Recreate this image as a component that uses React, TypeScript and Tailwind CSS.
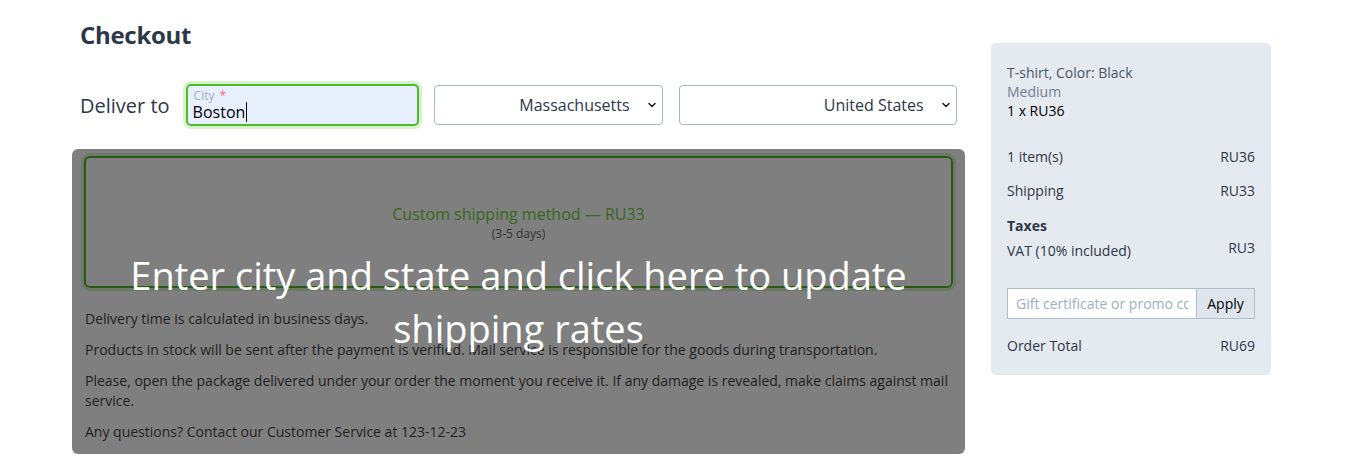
import React from "react";

function Chevron() {
  return (
    <svg width="10" height="10" viewBox="0 0 10 10" className="shrink-0">
      <path d="M2 3.5 L5 6.5 L8 3.5" fill="none" stroke="#222" strokeWidth="1.6" strokeLinecap="round" strokeLinejoin="round" />
    </svg>
  );
}

function SelectBox({ value, w }: { value: string; w: string }) {
  return (
    <div className={`${w} h-10 border border-[#a9b6c8] rounded-[4px] bg-white flex items-center justify-end pr-[5px] gap-[17px] text-[16px] text-[#2d3748]`}>
      <span>{value}</span>
      <Chevron />
    </div>
  );
}

export default function App() {
  const font = { fontFamily: '"Open Sans", "Noto Sans", sans-serif' };
  return (
    <div style={font} className="w-[1347px] h-[469px] bg-white overflow-hidden flex pl-[72px]">
      <div className="w-[893px] flex flex-col">
        <h1 className="pl-2 pt-[19px] text-[24px] leading-[32px] font-bold text-[#2d3748] tracking-[-0.3px]">Checkout</h1>
        <div className="mt-[33px] pl-2 flex items-center">
          <span className="text-[20px] text-[#2d3748] mr-[16px] mt-[1px]">Deliver to</span>
          <div className="w-[233px] h-[42px] border-2 border-[#4dbb2c] rounded-[5px] bg-[#e8f0fe] shadow-[0_0_0_3px_#d6f3cb] flex flex-col justify-center pl-[5px] pr-[5px]">
            <div className="text-[12px] leading-[13px] text-[#a0aec0] mt-[1px] pl-px">
              City <span className="text-[#f56565] ml-[2px]">*</span>
            </div>
            <div className="text-[16px] leading-[20px] text-black flex items-center">
              Boston<span className="inline-block w-px h-[20px] bg-black ml-px" />
            </div>
          </div>
          <div className="ml-[15px]">
            <SelectBox value="Massachusetts" w="w-[229px]" />
          </div>
          <div className="ml-[16px]">
            <SelectBox value="United States" w="w-[278px]" />
          </div>
        </div>
        <div className="relative mt-[23px] rounded-md overflow-hidden">
          <div className="px-3 pt-[7px] pb-3">
            <div className="h-[132px] border-2 border-[#52b52a] rounded-md shadow-[0_0_0_3px_#d6f3cb] flex flex-col items-center justify-center">
              <div className="text-[16px] leading-[22px] text-[#6cd03c]">Custom shipping method — RU33</div>
              <div className="text-[12px] leading-[17px] text-[#666]">(3-5 days)</div>
            </div>
            <div className="mt-[21px] text-[14px] leading-[20px] text-[#444] flex flex-col gap-[11px] pl-px">
              <p>Delivery time is calculated in business days.</p>
              <p>Products in stock will be sent after the payment is verified. Mail service is responsible for the goods during transportation.</p>
              <p>Please, open the package delivered under your order the moment you receive it. If any damage is revealed, make claims against mail service.</p>
              <p>Any questions? Contact our Customer Service at 123-12-23</p>
            </div>
          </div>
          <div className="absolute inset-0 bg-black/50 flex items-center justify-center text-center text-white text-[38px] leading-[53px] px-6 pt-[1px] cursor-pointer">
            Enter city and state and click here to update shipping rates
          </div>
        </div>
      </div>
      <div className="ml-[26px] mt-[43px] w-[280px] h-[332px] bg-[#e5eaf0] rounded-[5px] px-4 pt-[20px] text-[14px] leading-[19px]">
        <div className="text-[#4a5568]">T-shirt, Color: Black</div>
        <div className="text-[#718096]">Medium</div>
        <div className="text-black">1 x RU36</div>
        <div className="mt-[27px] flex justify-between text-[#2d3748]">
          <span>1 item(s)</span>
          <span>RU36</span>
        </div>
        <div className="mt-[15px] flex justify-between text-[#2d3748]">
          <span>Shipping</span>
          <span>RU33</span>
        </div>
        <div className="mt-[16px] font-bold text-[#2d3748]">Taxes</div>
        <div className="mt-[3px] flex justify-between items-start text-[#2d3748]">
          <span className="mt-[3px]">VAT (10% included)</span>
          <span>RU3</span>
        </div>
        <div className="mt-[28px] flex h-[31px]">
          <input
            className="flex-1 min-w-0 h-full bg-white border border-[#aebccc] border-r-0 px-2 text-[14px] text-[#2d3748] placeholder:text-[#a0aec0] outline-none"
            placeholder="Gift certificate or promo code"
            style={font}
          />
          <button className="w-[59px] h-full bg-[#dfe5ec] border border-[#aebccc] text-[14px] text-black" style={font}>Apply</button>
        </div>
        <div className="mt-[17px] flex justify-between text-[#2d3748]">
          <span>Order Total</span>
          <span>RU69</span>
        </div>
      </div>
    </div>
  );
}
